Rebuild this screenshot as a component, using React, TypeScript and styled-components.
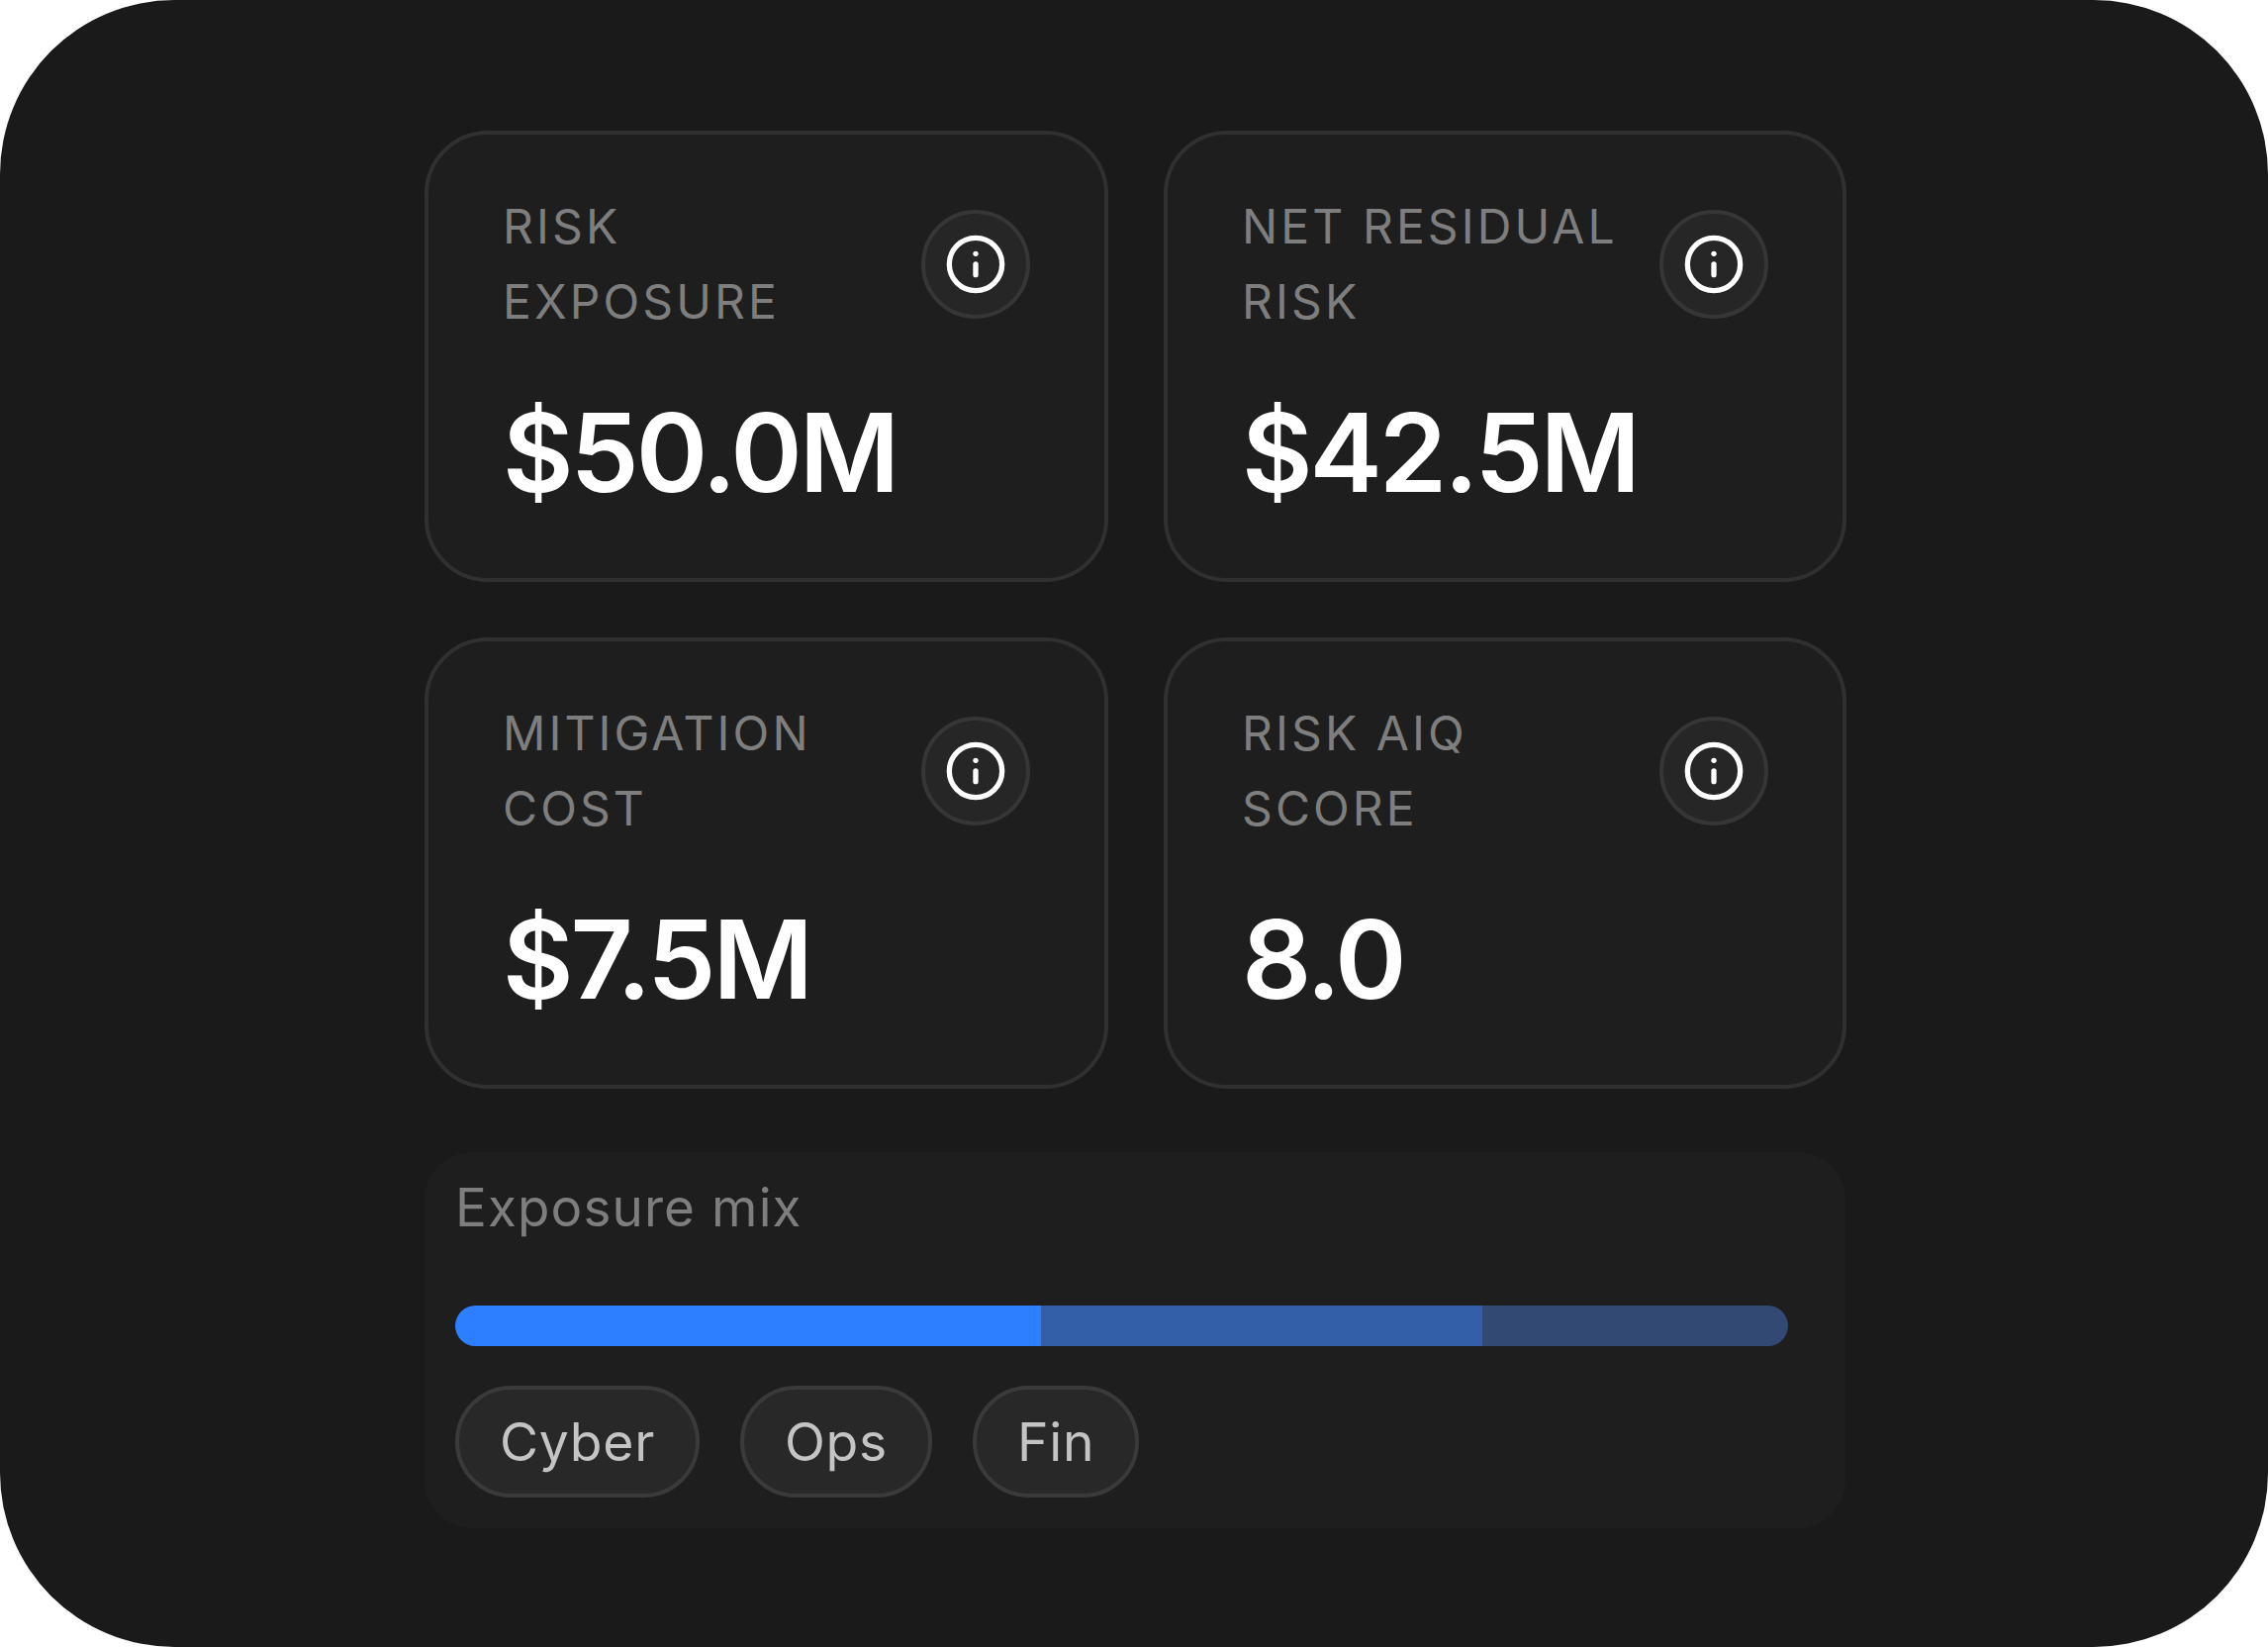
import React from "react";
import styled, { createGlobalStyle } from "styled-components";
import { Info } from "lucide-react";

const Global = createGlobalStyle`
  html, body { margin: 0; padding: 0; background: #fff; }
  body { font-family: Inter, "Liberation Sans", sans-serif; }
`;

const Stage = styled.div`
  width: 2292px;
  height: 1664px;
  box-sizing: border-box;
  background: #1a1a1a;
  border-radius: 176px;
  overflow: hidden;
  padding: 132px 427px 0 429px;
`;

const Grid = styled.div`
  display: grid;
  grid-template-columns: 691px 690px;
  grid-auto-rows: 456px;
  gap: 56px 56px;
`;

const Card = styled.div`
  box-sizing: border-box;
  background: #1e1e1e;
  border: 4px solid #303030;
  border-radius: 64px;
  padding: 55px 75px 0 75px;
`;

const CardTop = styled.div`
  display: flex;
  justify-content: space-between;
  align-items: center;
  gap: 32px;
`;

const Label = styled.div`
  font-size: 48px;
  line-height: 76px;
  letter-spacing: 3.1px;
  color: #7e7e7e;
  text-transform: uppercase;
`;

const IconButton = styled.div`
  box-sizing: border-box;
  flex: none;
  width: 110px;
  height: 110px;
  border-radius: 50%;
  background: #262626;
  border: 4px solid #363636;
  color: #fff;
  display: flex;
  align-items: center;
  justify-content: center;
`;

const Value = styled.div`
  margin: 49px 0 0;
  font-size: 110px;
  line-height: 130px;
  font-weight: 600;
  color: #fff;
  letter-spacing: -3px;
`;

const Panel = styled.div`
  box-sizing: border-box;
  margin-top: 64px;
  width: 1436px;
  height: 380px;
  background: #1e1e1e;
  border-radius: 48px;
  padding: 20px 32px 0 31px;
`;

const PanelTitle = styled.div`
  font-size: 53px;
  line-height: 72px;
  letter-spacing: 1.1px;
  color: #7e7e7e;
`;

const Bar = styled.div`
  display: flex;
  margin-top: 63px;
  width: 1347px;
  height: 41px;
  border-radius: 21px;
  overflow: hidden;
`;

const Segment = styled.div<{ $color: string }>`
  height: 100%;
  background: ${(p) => p.$color};
`;

const Chips = styled.div`
  display: flex;
  gap: 41px;
  margin-top: 40px;
`;

const Chip = styled.div`
  box-sizing: border-box;
  height: 113px;
  padding: 0 41px;
  border-radius: 57px;
  background: #282828;
  border: 4px solid #3a3a3a;
  color: #c4c4c4;
  font-size: 53.5px;
  letter-spacing: 0.7px;
  display: flex;
  align-items: center;
`;

const metrics = [
  { label: "Risk Exposure", value: "$50.0M" },
  { label: "Net Residual Risk", value: "$42.5M" },
  { label: "Mitigation Cost", value: "$7.5M" },
  { label: "Risk AIQ Score", value: "8.0" },
];

const segments = [
  { color: "#2e7fff", width: 592 },
  { color: "#325fa8", width: 446 },
  { color: "#324a73", width: 309 },
];

export default function App() {
  return (
    <Stage>
      <Global />
      <Grid>
        {metrics.map((m) => (
          <Card key={m.label}>
            <CardTop>
              <Label>{m.label}</Label>
              <IconButton>
                <Info size={64} strokeWidth={2} />
              </IconButton>
            </CardTop>
            <Value>{m.value}</Value>
          </Card>
        ))}
      </Grid>
      <Panel>
        <PanelTitle>Exposure mix</PanelTitle>
        <Bar>
          {segments.map((s) => (
            <Segment key={s.color} $color={s.color} style={{ width: s.width }} />
          ))}
        </Bar>
        <Chips>
          <Chip>Cyber</Chip>
          <Chip>Ops</Chip>
          <Chip>Fin</Chip>
        </Chips>
      </Panel>
    </Stage>
  );
}
